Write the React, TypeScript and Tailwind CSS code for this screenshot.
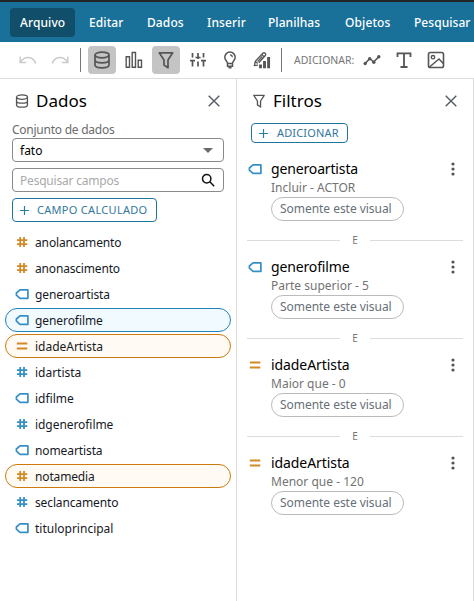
import type { ReactNode } from "react";

type Kind = "hash" | "tag" | "equal";
type Tone = "orange" | "blue";

const menu = [
  { label: "Arquivo", style: "w-[45px] tracking-[0.1px]" },
  { label: "Editar", style: "w-[34px] tracking-[0.1px]" },
  { label: "Dados", style: "w-[36px] tracking-[0.1px]" },
  { label: "Inserir", style: "w-[37px] tracking-[0.15px]" },
  { label: "Planilhas", style: "w-[53px] tracking-[0.05px]" },
  { label: "Objetos", style: "w-[45px] tracking-[0.1px]" },
  { label: "Pesquisar", style: "w-[56px] tracking-[0.05px]" },
];

const fields: { name: string; kind: Kind; tone: Tone; selected?: boolean; tracking: string }[] = [
  { name: "anolancamento", kind: "hash", tone: "orange", tracking: "tracking-[-0.13px]" },
  { name: "anonascimento", kind: "hash", tone: "orange", tracking: "tracking-[-0.17px]" },
  { name: "generoartista", kind: "tag", tone: "blue", tracking: "tracking-[-0.1px]" },
  { name: "generofilme", kind: "tag", tone: "blue", selected: true, tracking: "tracking-[-0.08px]" },
  { name: "idadeArtista", kind: "equal", tone: "orange", selected: true, tracking: "tracking-[-0.02px]" },
  { name: "idartista", kind: "hash", tone: "blue", tracking: "tracking-[-0.02px]" },
  { name: "idfilme", kind: "tag", tone: "blue", tracking: "tracking-[0px]" },
  { name: "idgenerofilme", kind: "hash", tone: "blue", tracking: "tracking-[-0.06px]" },
  { name: "nomeartista", kind: "tag", tone: "blue", tracking: "tracking-[-0.1px]" },
  { name: "notamedia", kind: "hash", tone: "orange", selected: true, tracking: "tracking-[-0.15px]" },
  { name: "seclancamento", kind: "hash", tone: "blue", tracking: "tracking-[-0.13px]" },
  { name: "tituloprincipal", kind: "tag", tone: "blue", tracking: "tracking-[0px]" },
];

const filters: { name: string; detail: string; kind: Kind; tracking: string }[] = [
  { name: "generoartista", detail: "Incluir - ACTOR", kind: "tag", tracking: "tracking-[-0.15px]" },
  { name: "generofilme", detail: "Parte superior - 5", kind: "tag", tracking: "tracking-[-0.15px]" },
  { name: "idadeArtista", detail: "Maior que - 0", kind: "equal", tracking: "tracking-[-0.08px]" },
  { name: "idadeArtista", detail: "Menor que - 120", kind: "equal", tracking: "tracking-[-0.08px]" },
];

function FieldIcon({ kind, tone }: { kind: Kind; tone: Tone }) {
  const color = tone === "orange" ? "text-[#d28a26]" : "text-[#3690c6]";
  return (
    <svg className={`shrink-0 ${color}`} width="14" height="12" viewBox="0 0 14 12" fill="none" stroke="currentColor">
      {kind === "hash" && <path d="M5.200 1v10M9 1v10M2 4.200h10.300M2 8.200h10.300" strokeWidth="1.800" />}
      {kind === "tag" && <path d="M5 1.900h7.900v8.400H5L1.400 7.200V5z" strokeWidth="1.700" strokeLinejoin="round" />}
      {kind === "equal" && <path d="M1.800 3.600h10.500M1.800 8.600h10.500" strokeWidth="2" />}
    </svg>
  );
}

function DatabaseIcon({ className }: { className: string }) {
  return (
    <svg className={className} viewBox="0 0 18 18" fill="none" stroke="currentColor" strokeWidth="1.700">
      <ellipse cx="9" cy="4" rx="7" ry="2.800" />
      <path d="M2 4v10c0 1.600 3 2.800 7 2.800s7-1.200 7-2.800V4M2 9c0 1.600 3 2.800 7 2.800S16 10.600 16 9" />
    </svg>
  );
}

function FunnelIcon({ className }: { className: string }) {
  return (
    <svg className={className} viewBox="0 0 18 18" fill="none" stroke="currentColor" strokeWidth="1.700" strokeLinejoin="round">
      <path d="M2.300 1.800h13.400l-4.700 7.200v7.700l-4-2.700V9z" />
    </svg>
  );
}

function CloseIcon() {
  return (
    <svg width="12" height="12" viewBox="0 0 12 12" stroke="#545b64" strokeWidth="1.400">
      <path d="M.7.7l10.600 10.600M11.300.7L.7 11.300" />
    </svg>
  );
}

function PlusIcon() {
  return (
    <svg width="9" height="9" viewBox="0 0 9 9" stroke="#2a7ca3" strokeWidth="1.200">
      <path d="M4.500 0v9M0 4.500h9" />
    </svg>
  );
}

function Tool({ children, active = false, className }: { children: ReactNode; active?: boolean; className: string }) {
  return (
    <button className={`flex h-7 shrink-0 items-center justify-center rounded ${active ? "bg-[#c4c4c4]" : ""} ${className}`}>
      {children}
    </button>
  );
}

function Toolbar() {
  return (
    <div className="flex h-[37px] items-center border-b border-[#dcdcdc] pl-[12px] text-[#555]">
      <Tool className="w-8">
        <svg width="18" height="10" viewBox="0 0 18 10" fill="none" stroke="#cacaca" strokeWidth="1.500">
          <path d="M1.200 1.500v6h6M1.500 7C5.500 1 14 .5 16.700 8.500" />
        </svg>
      </Tool>
      <Tool className="w-8">
        <svg width="18" height="10" viewBox="0 0 18 10" fill="none" stroke="#cacaca" strokeWidth="1.500">
          <path d="M16.800 1.500v6h-6M16.500 7C12.500 1 4 .5 1.300 8.500" />
        </svg>
      </Tool>
      <div className="ml-[4px] mr-[7px] h-6 w-px bg-[#777]" />
      <Tool active className="w-7">
        <DatabaseIcon className="h-[18px] w-[18px]" />
      </Tool>
      <Tool className="ml-[4px] w-7">
        <svg width="18" height="18" viewBox="0 0 18 18" fill="none" stroke="currentColor" strokeWidth="1.400">
          <path d="M1.200 5.700h3.300v10.600H1.200zM7.200 1.500h3.300v14.800H7.200zM13.200 9.200h3.300v7.100h-3.300z" />
        </svg>
      </Tool>
      <Tool active className="ml-[4px] w-7">
        <FunnelIcon className="h-[18px] w-[18px]" />
      </Tool>
      <Tool className="ml-[4px] w-7">
        <svg width="18" height="16" viewBox="0 0 18 16" fill="none" stroke="currentColor" strokeWidth="1.700">
          <path d="M3.500 1v4.500M3.500 8.700v5.800M9 1v6M9 9.500v5M14.500 1v4.500M14.500 8.700v5.800M1 8.700h5M6.500 5.500h5M12 8.700h5" />
        </svg>
      </Tool>
      <Tool className="ml-[4px] w-7">
        <svg width="14" height="18" viewBox="0 0 14 18" fill="none" stroke="currentColor" strokeWidth="1.500">
          <path d="M4.500 12.500C4.500 10 1.800 9.300 1.800 6.300a5.200 5.200 0 0 1 10.400 0c0 3-2.700 3.700-2.700 6.200zM4.500 12.500v2.700h5v-2.700M5.500 16.800h3" />
          <path d="M7 3.900A2.300 2.300 0 0 1 9.300 6.200" strokeWidth="1.200" />
        </svg>
      </Tool>
      <Tool className="ml-[4px] w-7">
        <svg width="18" height="18" viewBox="0 0 18 18" fill="none" stroke="currentColor" strokeWidth="1.300">
          <path d="M5 14.200L1.400 14.600 2.300 10.400 9.800 2.300q1.200-1.100 2.300-.1t.2 2.300L5.800 11.800M8.800 3.600l2.300 2.200M9.200 5.500L4.600 10.600M2.300 10.400l2.400 2" />
          <path d="M7.500 13.500v3.800M11.500 10v7.300M15.600 6v11.300" strokeWidth="2.900" />
        </svg>
      </Tool>
      <div className="ml-[5px] h-6 w-px bg-[#777]" />
      <span className="ml-[12px] w-[60px] whitespace-nowrap pt-px text-[10.5px] tracking-[0px] text-[#777]">ADICIONAR:</span>
      <Tool className="ml-[4px] w-7">
        <svg width="18" height="12" viewBox="0 0 18 12" fill="none" stroke="currentColor" strokeWidth="1.600">
          <path d="M2 9.700L6.700 4.500l4 3.500L16 2.500" />
          <g fill="currentColor" stroke="none">
            <circle cx="2.200" cy="9.500" r="1.700" /><circle cx="6.700" cy="4.700" r="1.700" /><circle cx="10.800" cy="8.200" r="1.700" /><circle cx="15.800" cy="2.700" r="1.700" />
          </g>
        </svg>
      </Tool>
      <Tool className="ml-[4px] w-7">
        <svg width="16" height="18" viewBox="0 0 16 18" fill="none" stroke="currentColor" strokeWidth="1.800">
          <path d="M1.500 6V2.400h13V6M8 2.400v13.500M4.500 16h7" />
        </svg>
      </Tool>
      <Tool className="ml-[4px] w-7">
        <svg width="18" height="18" viewBox="0 0 18 18" fill="none" stroke="currentColor" strokeWidth="1.600">
          <rect x="1.500" y="1.500" width="15" height="15" rx="1.800" />
          <circle cx="6" cy="6.200" r="1.700" strokeWidth="1.400" />
          <path d="M2.500 16L12 8l4.300 4.500" strokeWidth="1.500" />
        </svg>
      </Tool>
    </div>
  );
}

function PanelHeader({ icon, title, className }: { icon: ReactNode; title: string; className: string }) {
  return (
    <div className={`flex h-[24px] items-center ${className}`}>
      {icon}
      <h2 className="ml-[7px] flex-1 text-[17px] leading-[24px] text-black">{title}</h2>
      <CloseIcon />
    </div>
  );
}

function DataPanel() {
  return (
    <section className="flex w-[237px] shrink-0 flex-col border-r border-[#dcdcdc]">
      <PanelHeader
        title="Dados"
        className="mt-[10px] pl-[15px] pr-[16px]"
        icon={<DatabaseIcon className="h-[14px] w-[14px] text-[#555]" />}
      />
      <div className="mt-[8px] px-3">
        <label className="block h-[17px] text-[12px] leading-[18px] tracking-[-0.25px] text-[#6b6b6b]">Conjunto de dados</label>
        <div className="flex h-6 w-[212px] items-center justify-between rounded border border-[#8a8a8a] pl-[7px] pr-[10px] text-[12px] text-black">
          <span className="pt-px">fato</span>
          <svg width="10" height="5" viewBox="0 0 10 5" fill="#6b6b6b"><path d="M0 0h10L5 5z" /></svg>
        </div>
        <div className="mt-[6px] flex h-6 w-[212px] items-center justify-between rounded border border-[#8a8a8a] pl-[7px] pr-[8px] text-[12px] text-[#aaa]">
          <span className="pt-[2px] tracking-[-0.2px]">Pesquisar campos</span>
          <svg width="14" height="14" viewBox="0 0 14 14" fill="none" stroke="#111" strokeWidth="1.500">
            <circle cx="5.700" cy="5.700" r="4.200" /><path d="M8.800 8.800l4.400 4.400" />
          </svg>
        </div>
        <button className="mt-[6px] flex h-6 w-[145px] items-center gap-[8px] whitespace-nowrap rounded border border-[#1f759b] pl-[7px] text-[11px] tracking-[0.300px] text-[#33779d]">
          <PlusIcon />CAMPO CALCULADO
        </button>
      </div>
      <ul className="mt-[8px] flex flex-col gap-[2px] pl-[5px]">
        {fields.map((field) => (
          <li
            key={field.name}
            className={`flex h-6 w-[226px] items-center gap-[6px] rounded-full border pl-[9px] text-[12px] text-[#16191f] ${
              !field.selected ? "border-transparent" : field.tone === "blue" ? "border-[#1f83bd] bg-[#f1faff]" : "border-[#cc7a0d] bg-[#fffbf4]"
            }`}
          >
            <FieldIcon kind={field.kind} tone={field.tone} />
            <span className={`pt-px ${field.tracking}`}>{field.name}</span>
          </li>
        ))}
      </ul>
    </section>
  );
}

function FilterPanel() {
  return (
    <section className="flex w-[237px] shrink-0 flex-col border-r border-[#dcdcdc]">
      <PanelHeader
        title="Filtros"
        className="mt-[10px] pl-[15px] pr-[16px]"
        icon={<FunnelIcon className="h-[14px] w-[14px] text-[#555]" />}
      />
      <button className="ml-[14px] mt-[10px] flex h-[20px] w-[97px] items-center gap-[9px] whitespace-nowrap rounded border border-[#1f759b] pl-[7px] text-[11px] tracking-[0.15px] text-[#33779d]">
        <PlusIcon />ADICIONAR
      </button>
      <div className="mt-[16px] flex flex-col">
        {filters.map((filter, index) => (
          <div key={index} className="h-[98px]">
            <div className="flex h-[20px] items-center pl-[11px] pr-[18px]">
              <FieldIcon kind={filter.kind} tone={filter.kind === "equal" ? "orange" : "blue"} />
              <span className={`ml-[9px] flex-1 text-[14px] leading-[20px] text-black ${filter.tracking}`}>{filter.name}</span>
              <svg width="4" height="14" viewBox="0 0 4 14" fill="#545454">
                <circle cx="2" cy="2" r="1.600" /><circle cx="2" cy="7" r="1.600" /><circle cx="2" cy="12" r="1.600" />
              </svg>
            </div>
            <div className="h-[18px] pl-[34px] text-[12px] leading-[18px] tracking-[0.01px] text-[#737373]">{filter.detail}</div>
            <div className="ml-[34px] flex h-6 w-[133px] items-center rounded-full border border-[#bbb] pl-[8px] text-[12px] tracking-[-0.04px] text-[#687078]">
              <span>Somente este visual</span>
            </div>
            {index < filters.length - 1 && (
              <div className="mt-[10px] flex h-[18px] items-center px-[10px] text-[10px] text-[#777]">
                <span className="h-px w-[93px] bg-[#dcdcdc]" />
                <span className="flex-1 pt-px text-center">E</span>
                <span className="h-px w-[93px] bg-[#dcdcdc]" />
              </div>
            )}
          </div>
        ))}
      </div>
    </section>
  );
}

export default function App() {
  return (
    <main className="flex h-[601px] w-[474px] flex-col overflow-hidden bg-white font-['Noto_Sans','Open_Sans',sans-serif]">
      <nav className="flex h-[42px] shrink-0 items-center gap-[4px] border-t-2 border-[#232628] bg-[#19719a] pl-[10px] text-[12px] font-medium text-white">
        {menu.map((item, index) => (
          <a key={item.label} className={`flex h-[29px] items-center rounded px-[10px] ${index === 0 ? "bg-[#114e69]" : ""}`}>
            <span className={`whitespace-nowrap pt-px ${item.style}`}>{item.label}</span>
          </a>
        ))}
      </nav>
      <Toolbar />
      <div className="flex min-h-0 flex-1">
        <DataPanel />
        <FilterPanel />
      </div>
    </main>
  );
}
